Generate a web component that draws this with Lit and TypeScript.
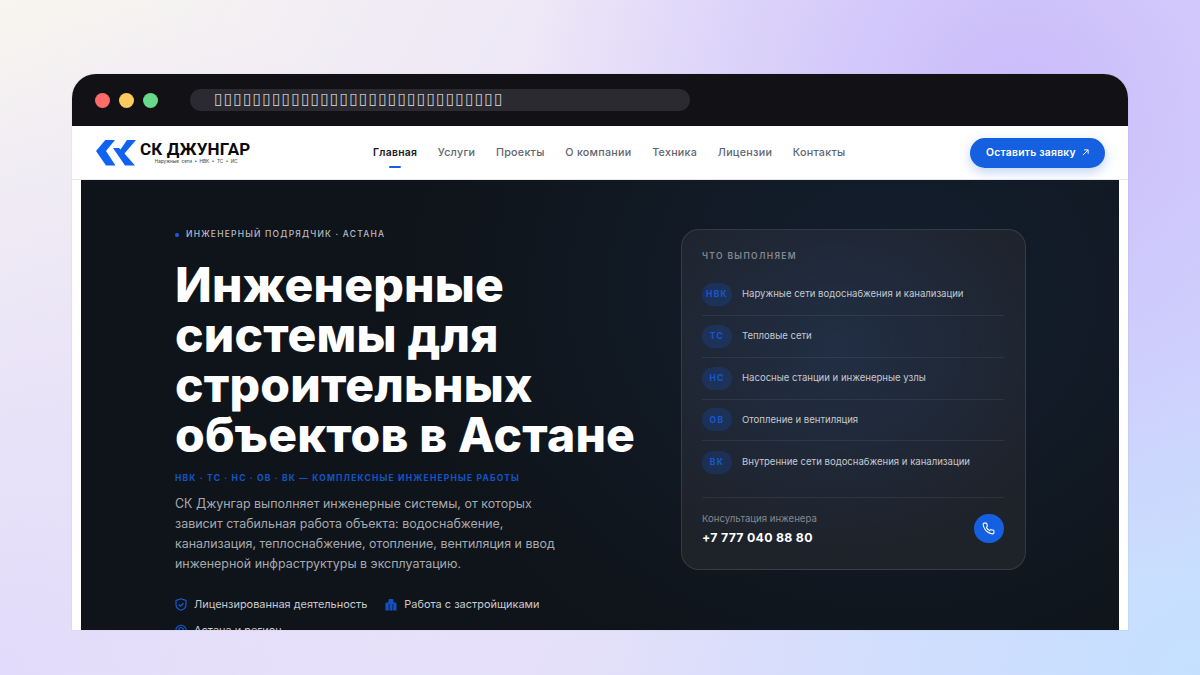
import { LitElement, html, css } from "lit";
import { customElement } from "lit/decorators.js";

const NAV = ["Главная", "Услуги", "Проекты", "О компании", "Техника", "Лицензии", "Контакты"];
const ROWS: [string, string][] = [
  ["НВК", "Наружные сети водоснабжения и канализации"],
  ["ТС", "Тепловые сети"],
  ["НС", "Насосные станции и инженерные узлы"],
  ["ОВ", "Отопление и вентиляция"],
  ["ВК", "Внутренние сети водоснабжения и канализации"],
];

@customElement("app-root")
export class AppRoot extends LitElement {
  static styles = css`
    :host {
      display: flex;
      height: 675px;
      box-sizing: border-box;
      padding: 74px 72px 45px;
      overflow: hidden;
      font-family: Inter, sans-serif;
      background:
        radial-gradient(circle at 85% 15%, #c9bbfb 0, rgba(201,187,251,0) 42%),
        radial-gradient(circle at 100% 100%, #c5e0ff 0, rgba(197,224,255,0) 45%),
        radial-gradient(circle at 0 100%, #e2dbfb 0, rgba(226,219,251,0) 50%),
        linear-gradient(120deg, #f8f6ef 0%, #ece6f8 40%, #d8d6fc 100%);
    }
    .window {
      flex: 1;
      display: flex;
      flex-direction: column;
      border-radius: 24px 24px 0 0;
      overflow: hidden;
      background: #fff;
      box-shadow: 0 0 1px rgba(60,50,110,.35);
    }
    .chrome {
      height: 52px;
      flex: none;
      background: #111116;
      display: flex;
      align-items: center;
      padding-left: 23px;
      gap: 9px;
    }
    .dot { width: 15px; height: 15px; border-radius: 50%; }
    .red { background: #ff6a6a; }
    .yellow { background: #ffcb5c; }
    .green { background: #68d98a; }
    .url {
      margin-left: 23px;
      width: 500px;
      height: 22px;
      border-radius: 11px;
      background: #2a2a30;
      box-sizing: border-box;
      padding-left: 24px;
      color: #c4c4c8;
      font: 16px/20px "DejaVu Sans", sans-serif;
      letter-spacing: .85px;
      white-space: nowrap;
      overflow: hidden;
    }
    .nav {
      height: 53px;
      flex: none;
      box-sizing: border-box;
      display: flex;
      align-items: center;
      padding: 0 23px;
      background: #fff;
    }
    .logo { display: flex; align-items: center; gap: 2px; width: 278px; flex: none; }
    .logo svg { width: 43px; height: 28px; flex: none; }
    .brand { display: flex; flex-direction: column; align-items: center; }
    .brand b {
      font: 700 17px/18px Roboto, sans-serif;
      color: #0b0b0f;
      letter-spacing: .15px;
    }
    .brand small {
      font: 500 4.6px/6px Inter, sans-serif;
      color: #555;
      word-spacing: 1.4px;
      white-space: nowrap;
      margin: 1px 0 0 2px;
    }
    .links { display: flex; gap: 20.7px; }
    .link {
      position: relative;
      font: 500 10.75px/16px Inter, sans-serif;
      color: #5f6570;
      letter-spacing: .25px;
    }
    .link.on { color: #16181d; font-weight: 600; font-size: 10.4px; }
    .link.on::after {
      content: "";
      position: absolute;
      left: 50%;
      margin-left: -6px;
      top: 21px;
      width: 12px;
      height: 2px;
      border-radius: 1px;
      background: #1560e0;
    }
    .cta {
      margin-left: auto;
      width: 135px;
      height: 30px;
      border-radius: 15px;
      background: #1560e0;
      color: #fff;
      display: flex;
      align-items: center;
      justify-content: center;
      gap: 6px;
      font: 600 10.4px/16px Inter, sans-serif;
      letter-spacing: .22px;
      box-shadow: 0 4px 12px rgba(21,96,224,.28);
    }
    .cta svg { width: 7px; height: 7px; }
    .frame {
      flex: 1;
      min-height: 0;
      padding: 0 9px;
      border-top: 1px solid #e6e8ec;
    }
    .hero {
      height: 100%;
      box-sizing: border-box;
      padding: 49px 93.5px 0 94px;
      display: flex;
      justify-content: space-between;
      align-items: flex-start;
      overflow: hidden;
      background:
        radial-gradient(ellipse 480px 420px at 78% 25%, rgba(24,44,72,.45) 0, rgba(24,44,72,0) 100%),
        #0f141a;
    }
    .left { width: 470px; flex: none; }
    .eyebrow {
      display: flex;
      align-items: center;
      gap: 7px;
      height: 11px;
      font: 500 8.5px/11px Inter, sans-serif;
      letter-spacing: 1.2px;
      color: #b8bcc4;
    }
    .eyebrow i { width: 4px; height: 4px; border-radius: 50%; background: #1560e0; }
    h1 {
      margin: 20px 0 0;
      width: 480px;
      font: 800 48px/50px Inter, sans-serif;
      letter-spacing: .2px;
      color: #fff;
    }
    .accent {
      margin: 12px 0 0;
      font: 700 8.5px/12px Inter, sans-serif;
      letter-spacing: 1.19px;
      color: #1454c8;
    }
    .lead {
      margin: 10px 0 0;
      width: 385px;
      font: 400 12.45px/20px Inter, sans-serif;
      color: #a6a9af;
    }
    .feats {
      margin-top: 23px;
      display: flex;
      flex-wrap: wrap;
      gap: 12px 18px;
      width: 400px;
    }
    .feat {
      display: flex;
      align-items: center;
      gap: 7px;
      font: 400 10.95px/14px Inter, sans-serif;
      color: #c8cacf;
    }
    .feat svg { width: 12px; height: 13px; flex: none; }
    .card {
      width: 344.5px;
      height: 341px;
      flex: none;
      box-sizing: border-box;
      padding: 21px 21px 0 20px;
      border-radius: 18px;
      border: 1px solid rgba(255,255,255,.11);
      background:
        radial-gradient(ellipse 260px 220px at 45% 35%, rgba(36,58,96,.5) 0, rgba(36,58,96,0) 100%),
        #1e2229;
    }
    .card-title {
      font: 600 8.5px/11px Inter, sans-serif;
      letter-spacing: 1.35px;
      color: #85888f;
    }
    .rows { margin-top: 12px; }
    .row {
      height: 41.85px;
      box-sizing: border-box;
      display: flex;
      align-items: center;
      gap: 10px;
      border-bottom: 1px solid rgba(255,255,255,.07);
    }
    .row:last-child { border-bottom: 0; }
    .pill {
      width: 30px;
      height: 23px;
      flex: none;
      border-radius: 12px;
      background: rgba(21,84,200,.24);
      color: #1558d0;
      display: flex;
      align-items: center;
      justify-content: center;
      font: 700 8.5px/1 Inter, sans-serif;
      letter-spacing: 1.3px;
    }
    .row span {
      font: 400 9.55px/14px Inter, sans-serif;
      color: #c6c9ce;
    }
    .foot {
      margin-top: 14px;
      height: 61px;
      border-top: 1px solid rgba(255,255,255,.07);
      display: flex;
      align-items: center;
      justify-content: space-between;
    }
    .foot small { display: block; font: 400 9.6px/14px Inter, sans-serif; color: #85888f; }
    .foot b { display: block; margin-top: 4px; font: 700 12.3px/16px Inter, sans-serif; color: #fff; letter-spacing: .3px; }
    .call {
      width: 29.5px;
      height: 29.5px;
      border-radius: 50%;
      background: #1560e0;
      display: flex;
      align-items: center;
      justify-content: center;
    }
    .call svg { width: 13px; height: 13px; }
  `;

  render() {
    return html`
      <div class="window">
        <div class="chrome">
          <i class="dot red"></i><i class="dot yellow"></i><i class="dot green"></i>
          <div class="url">${"\u25AF".repeat(30)}</div>
        </div>
        <div class="nav">
          <div class="logo">
            <svg viewBox="0 0 43 28">
              <path fill="#1062f0" d="M1 12 10.300 1H20l-9 11 9.500 14.500H11zM18 9h6l1.500 1.500L32 1h9L29.500 14.500 40 26.500H30z" />
            </svg>
            <div class="brand"><b>СК ДЖУНГАР</b><small>Наружные сети • НВК • ТС • ИС</small></div>
          </div>
          <div class="links">
            ${NAV.map((n, i) => html`<span class="link ${i === 0 ? "on" : ""}">${n}</span>`)}
          </div>
          <div class="cta">Оставить заявку
            <svg viewBox="0 0 8 8" fill="none" stroke="#fff" stroke-width="1.100"><path d="M1 7l6-6M2.500 1H7v4.500" /></svg>
          </div>
        </div>
        <div class="frame">
          <div class="hero">
            <div class="left">
              <div class="eyebrow"><i></i>ИНЖЕНЕРНЫЙ ПОДРЯДЧИК · АСТАНА</div>
              <h1>Инженерные системы для строительных объектов в Астане</h1>
              <p class="accent">НВК · ТС · НС · ОВ · ВК — КОМПЛЕКСНЫЕ ИНЖЕНЕРНЫЕ РАБОТЫ</p>
              <p class="lead">СК Джунгар выполняет инженерные системы, от которых зависит стабильная работа объекта: водоснабжение, канализация, теплоснабжение, отопление, вентиляция и ввод инженерной инфраструктуры в эксплуатацию.</p>
              <div class="feats">
                <div class="feat"><svg viewBox="0 0 24 26" fill="none" stroke="#1560e0" stroke-width="2.200"><path d="M12 1.500l10 3.500v8c0 6-4.500 10-10 11.500C6.500 23 2 19 2 13V5z"/><path d="M7.500 13l3.500 3.500 6-6"/></svg>Лицензированная деятельность</div>
                <div class="feat"><svg viewBox="0 0 24 26" fill="#1450c0" fill-rule="evenodd"><path d="M1 25V11q0-2 2-2h4V4q0-2 2-2h6q2 0 2 2v5h4q2 0 2 2v14zM7.500 12v13h1.500V12zM15 12v13h1.500V12z"/></svg>Работа с застройщиками</div>
                <div class="feat"><svg viewBox="0 0 24 26" fill="none" stroke="#1560e0" stroke-width="2.200"><circle cx="12" cy="13" r="10.500"/><path d="M12 19c-3-3-4.500-5-4.500-7.500a4.500 4.500 0 0 1 9 0C16.500 14 15 16 12 19z"/></svg>Астана и регион</div>
              </div>
            </div>
            <div class="card">
              <div class="card-title">ЧТО ВЫПОЛНЯЕМ</div>
              <div class="rows">
                ${ROWS.map(([a, b]) => html`<div class="row"><div class="pill">${a}</div><span>${b}</span></div>`)}
              </div>
              <div class="foot">
                <div><small>Консультация инженера</small><b>+7 777 040 88 80</b></div>
                <div class="call"><svg viewBox="0 0 24 24" fill="none" stroke="#fff" stroke-width="2" stroke-linecap="round" stroke-linejoin="round"><path d="M22 16.900v3a2 2 0 0 1-2.200 2 19.800 19.800 0 0 1-8.600-3.100 19.500 19.500 0 0 1-6-6 19.800 19.800 0 0 1-3.100-8.700A2 2 0 0 1 4.100 2h3a2 2 0 0 1 2 1.700c.1 1 .4 1.900.7 2.800a2 2 0 0 1-.5 2.100L8.100 9.900a16 16 0 0 0 6 6l1.300-1.300a2 2 0 0 1 2.100-.4c.9.300 1.800.6 2.800.7a2 2 0 0 1 1.700 2z"/></svg></div>
              </div>
            </div>
          </div>
        </div>
      </div>
    `;
  }
}
